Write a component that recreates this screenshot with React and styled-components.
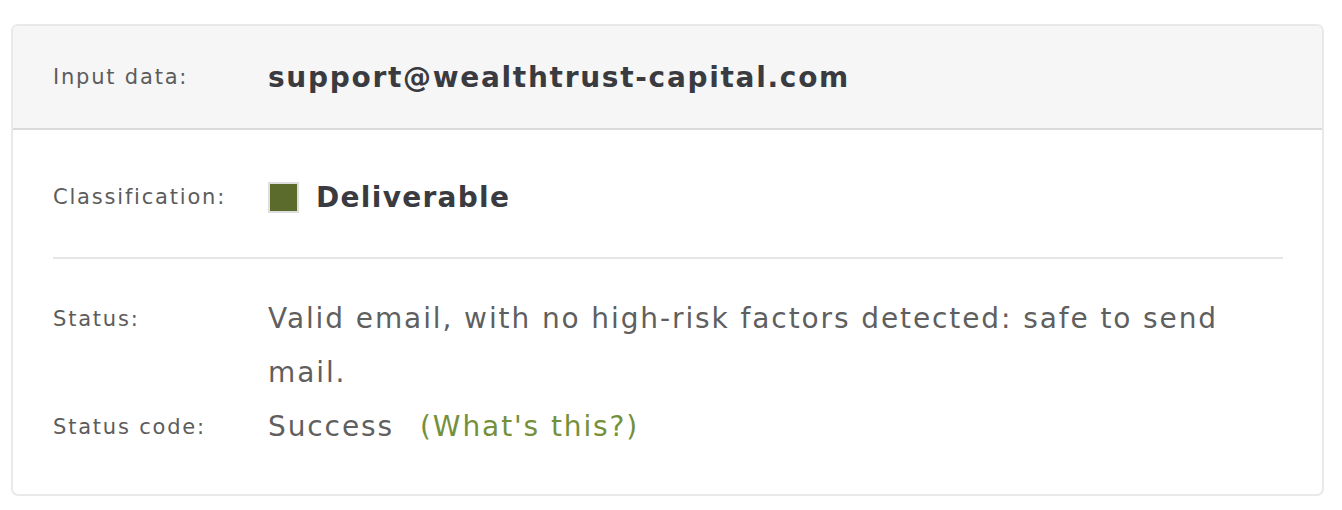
import React from "react";
import styled, { createGlobalStyle } from "styled-components";

const GlobalStyle = createGlobalStyle`
  body {
    margin: 0;
    background: #ffffff;
    font-family: "DejaVu Sans", "Open Sans", sans-serif;
  }
`;

const Page = styled.div`
  padding: 24px 18px 16px 11px;
`;

const Card = styled.div`
  border: 2px solid #e9e9ec;
  border-radius: 7px;
  overflow: hidden;
  background: #ffffff;
`;

const Header = styled.div`
  display: grid;
  grid-template-columns: 215px 1fr;
  align-items: center;
  height: 102px;
  padding-left: 40px;
  background: #f6f6f6;
  border-bottom: 2px solid #dadada;
`;

const Body = styled.div`
  padding: 0 39px 40px 40px;
`;

const Row = styled.div`
  display: grid;
  grid-template-columns: 215px 1fr;
  align-items: ${(p) => (p.top ? "start" : "center")};
  min-height: 54px;
`;

const Section = styled.div`
  padding: ${(p) => p.pad || "0"};
  border-bottom: ${(p) => (p.divided ? "2px solid #e6e6e6" : "none")};
`;

const Label = styled.div`
  font-size: 21px;
  letter-spacing: 1.8px;
  color: #5c5c5c;
  line-height: 54px;
`;

const Email = styled.div`
  font-size: 28px;
  font-weight: 700;
  letter-spacing: 1.7px;
  color: #3a3b40;
`;

const Class = styled.div`
  display: flex;
  align-items: center;
  gap: 17px;
  font-size: 28px;
  font-weight: 700;
  letter-spacing: 1.3px;
  color: #3a3b40;
`;

const Swatch = styled.span`
  flex: none;
  width: 27px;
  height: 27px;
  background: #5a6b2b;
  border: 2px solid #dedede;
`;

const Value = styled.div`
  font-size: 28px;
  letter-spacing: 1.9px;
  color: #5f5f5f;
  line-height: 54px;
`;

const Link = styled.a`
  margin-left: 26px;
  color: #74903a;
  text-decoration: none;
`;

export default function App() {
  return (
    <>
      <GlobalStyle />
      <Page>
        <Card>
          <Header>
            <Label>Input data:</Label>
            <Email>support@wealthtrust-capital.com</Email>
          </Header>
          <Body>
            <Section divided pad="40px 0 33px">
              <Row>
                <Label>Classification:</Label>
                <Class>
                  <Swatch />
                  Deliverable
                </Class>
              </Row>
            </Section>
            <Section pad="33px 0 0">
              <Row top>
                <Label>Status:</Label>
                <Value>
                  Valid email, with no high-risk factors detected: safe to send mail.
                </Value>
              </Row>
              <Row>
                <Label>Status code:</Label>
                <Value>
                  Success<Link href="#">(What's this?)</Link>
                </Value>
              </Row>
            </Section>
          </Body>
        </Card>
      </Page>
    </>
  );
}
